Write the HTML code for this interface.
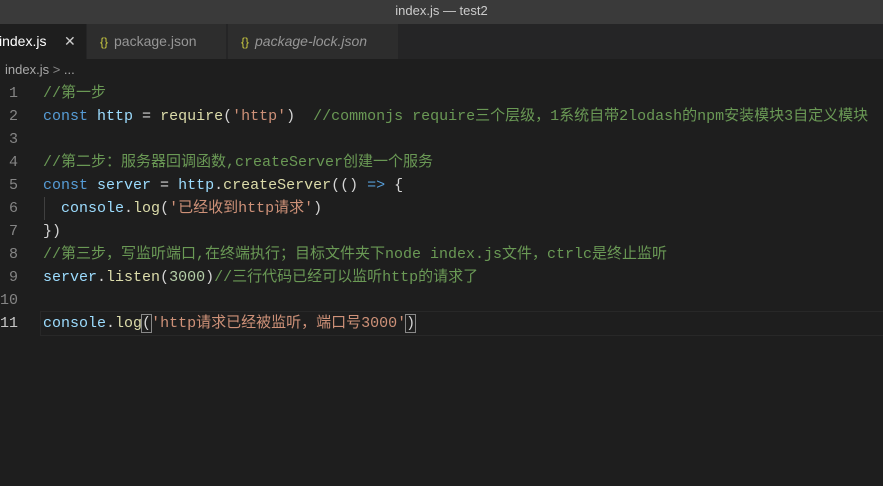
<!DOCTYPE html>
<html><head><meta charset="utf-8">
<style>
body{margin:0;width:883px;height:486px;background:#1e1e1e;overflow:hidden;font-family:"Liberation Sans","Noto Sans CJK SC",sans-serif;}
.title{height:24px;background:#3a3a3a;color:#cccccc;font-size:13px;text-align:center;line-height:22px;}
.tabs{height:35px;background:#252526;position:relative;}
.tab{position:absolute;top:0;height:35px;line-height:35px;font-size:14px;color:#969696;background:#2d2d2d;border-right:1px solid #252526;}
.tab .b{color:#cbcb41;font-size:12px;margin-right:6px;}
.crumb{height:23px;line-height:22px;font-size:13px;color:#a9a9a9;padding-left:5px;}
.code{position:relative;font-family:"Liberation Mono","Noto Sans CJK SC",monospace;font-size:15px;}
.ln{position:absolute;left:0;width:18px;text-align:right;color:#858585;}
.l{position:absolute;left:43px;height:23px;line-height:23px;white-space:pre;color:#d4d4d4;}
.c{color:#6a9955}.k{color:#569cd6}.v{color:#9cdcfe}.f{color:#dcdcaa}.s{color:#ce9178}
</style></head><body>
<div class="title">index.js — test2</div>
<div class="tabs">
<div class="tab" style="left:0;width:86px;background:#1e1e1e;color:#fff;"><span style="margin-left:-1px">index.js</span><span style="position:absolute;left:64px;color:#ccc;font-size:14px">✕</span></div>
<div class="tab" style="left:87px;width:140px;padding-left:13px;box-sizing:border-box"><span class="b">{}</span>package.json</div>
<div class="tab" style="left:228px;width:171px;padding-left:13px;box-sizing:border-box"><span class="b">{}</span><i>package-lock.json</i></div>
</div>
<div class="crumb">index.js <span style="color:#888">&gt;</span> ...</div>
<div class="code">
<div class="ln" style="top:0;line-height:23px;height:23px">1</div>
<div class="ln" style="top:23px;line-height:23px">2</div>
<div class="ln" style="top:46px;line-height:23px">3</div>
<div class="ln" style="top:69px;line-height:23px">4</div>
<div class="ln" style="top:92px;line-height:23px">5</div>
<div class="ln" style="top:115px;line-height:23px">6</div>
<div class="ln" style="top:138px;line-height:23px">7</div>
<div class="ln" style="top:161px;line-height:23px">8</div>
<div class="ln" style="top:184px;line-height:23px">9</div>
<div class="ln" style="top:207px;line-height:23px">10</div>
<div class="ln" style="top:230px;line-height:23px;color:#c6c6c6">11</div>
<div style="position:absolute;left:40px;right:0;top:229px;height:23px;border:1px solid #282828;border-right:none"></div>
<div style="position:absolute;left:44px;top:115px;width:1px;height:23px;background:#404040"></div>
<div class="l c" style="top:0">//第一步</div>
<div class="l" style="top:23px"><span class="k">const</span> <span class="v">http</span> = <span class="f">require</span>(<span class="s">'http'</span>)  <span class="c">//commonjs require三个层级，1系统自带2lodash的npm安装模块3自定义模块</span></div>
<div class="l c" style="top:69px">//第二步：服务器回调函数,createServer创建一个服务</div>
<div class="l" style="top:92px"><span class="k">const</span> <span class="v">server</span> = <span class="v">http</span>.<span class="f">createServer</span>(() <span class="k">=&gt;</span> {</div>
<div class="l" style="top:115px">  <span class="v">console</span>.<span class="f">log</span>(<span class="s">'已经收到http请求'</span>)</div>
<div class="l" style="top:138px">})</div>
<div class="l c" style="top:161px">//第三步，写监听端口,在终端执行；目标文件夹下node index.js文件，ctrlc是终止监听</div>
<div class="l" style="top:184px"><span class="v">server</span>.<span class="f">listen</span>(<span style="color:#b5cea8">3000</span>)<span class="c">//三行代码已经可以监听http的请求了</span></div>
<div class="l" style="top:230px"><span class="v">console</span>.<span class="f">log</span><span style="outline:1px solid #888">(</span><span class="s">'http请求已经被监听，端口号3000'</span><span style="outline:1px solid #888">)</span></div>
</div>
</body></html>
